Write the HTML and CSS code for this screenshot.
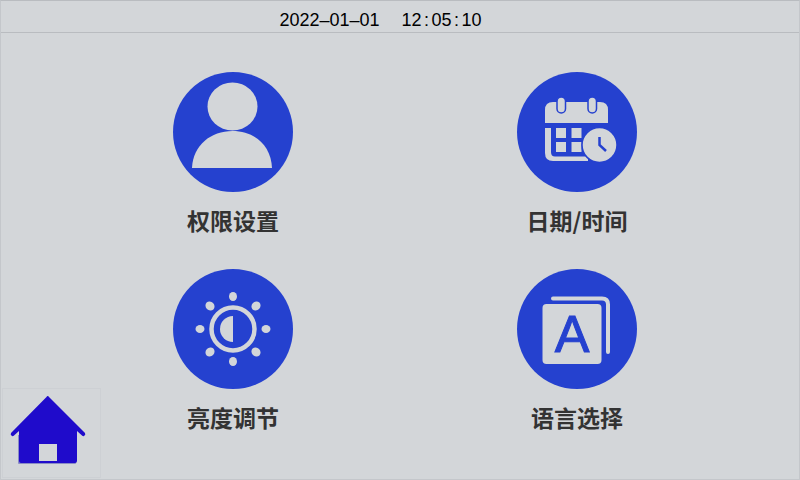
FILE: index.html
```html
<html>
<head>
<title>settings</title>
<meta charset='utf-8'/>
<link rel="stylesheet" href="styles.css">
</head>
<body>
<div id='screen'>
<div class='topbar'>
<span class='clock'>2022&ndash;01&ndash;01</span>
<span class='clock'>12<span class='colon'>:</span>05<span class='colon'>:</span>10</span>
</div>
<div class='menu'>
<div class='item first'>
<svg class='icon' viewBox='0 0 120 120'>
<circle class='disc' cx='60' cy='60' r='60'/>
<ellipse class='pale' cx='59.500' cy='34.500' rx='25' ry='24'/>
<path class='pale' d='M19 96C20 73 38 59 59.500 59C81 59 98 73 99 96Z'/>
</svg>
<div class='label'>权限设置</div>
</div>
<div class='item'>
<svg class='icon' viewBox='0 0 120 120'>
<circle class='disc' cx='60' cy='60' r='60'/>
<path class='pale' d='M28 51V38Q28 30 36 30H83Q91 30 91 38V51Z'/>
<rect class='pale ring' x='40' y='25' width='8.500' height='16' rx='4.250'/>
<rect class='pale ring' x='71' y='25' width='8.500' height='16' rx='4.250'/>
<path class='pale' d='M28 56H34V80Q34 84.500 38 84.500H71V89H36Q28 89 28 81Z'/>
<rect class='pale' x='39' y='56' width='10' height='10'/>
<rect class='pale' x='54.500' y='56' width='10' height='10'/>
<rect class='pale' x='39' y='70' width='10' height='10'/>
<rect class='pale' x='54.500' y='70' width='10' height='10'/>
<circle class='pale ring' cx='82.500' cy='73' r='17.500'/>
<path class='hand' d='M82.500 65V73L89 79'/>
</svg>
<div class='label'>日期/时间</div>
</div>
<button class='home'>
<svg viewBox='0 0 99 90' width='99' height='90'>
<path class='home-shade' d='M16 47H74V75Q74 76 73 76H17Q16 76 16 75Z'/>
<path class='home-fill' d='M45.700 8Q46.500 8 47 9L83 45Q84 47 82 48Q81 48.500 80 47.500L75 43V73Q75 75 73 75H19Q17 75 17 73V43L12 47.500Q11 48.500 10 48Q8 47 9 45L44.500 9Q45 8 45.700 8Z'/>
<rect class='pale' x='37' y='56' width='18' height='17'/>
</svg>
</button>
<div class='item first'>
<svg class='icon' viewBox='0 0 120 120'>
<circle class='disc' cx='60' cy='60' r='60'/>
<circle class='sun' cx='60' cy='60' r='21.500'/>
<path class='pale' d='M60 47A13 13 0 0 0 60 73Z'/>
<ellipse class='pale' cx='60' cy='27.500' rx='4' ry='4.500'/>
<ellipse class='pale' cx='60' cy='92.500' rx='4' ry='4.500'/>
<ellipse class='pale' cx='27' cy='60' rx='4.500' ry='4'/>
<ellipse class='pale' cx='93' cy='60' rx='4.500' ry='4'/>
<ellipse class='pale' cx='37' cy='37' rx='4.800' ry='4.300' transform='rotate(45 37 37)'/>
<ellipse class='pale' cx='83' cy='37' rx='4.800' ry='4.300' transform='rotate(-45 83 37)'/>
<ellipse class='pale' cx='37' cy='83' rx='4.800' ry='4.300' transform='rotate(-45 37 83)'/>
<ellipse class='pale' cx='83' cy='83' rx='4.800' ry='4.300' transform='rotate(45 83 83)'/>
</svg>
<div class='label'>亮度调节</div>
</div>
<div class='item'>
<svg class='icon' viewBox='0 0 120 120'>
<circle class='disc' cx='60' cy='60' r='60'/>
<path class='back' d='M36 29.500H85Q91 29.500 91 35.500V83'/>
<rect class='pale' x='25.500' y='35' width='59' height='60' rx='4'/>
<text class='letter' x='55' y='83'>A</text>
</svg>
<div class='label'>语言选择</div>
</div>
</div>
</div>
</body>
</html>
```
FILE: styles.css
```css
html, body {
	margin: 0;
	padding: 0;
}
#screen {
	width: 800px;
	height: 480px;
	box-sizing: border-box;
	background: #d3d6d9;
	border-top: 1px solid #b9bcc0;
	border-left: 1px solid #c4c7cb;
	border-right: 1px solid #c4c7cb;
	border-bottom: 1px solid #c4c7cb;
	overflow: hidden;
	display: flex;
	flex-direction: column;
}
.topbar {
	height: 24px;
	padding: 7px 39px 0 0;
	border-bottom: 1px solid #b9bcc0;
	display: flex;
	justify-content: center;
	align-items: center;
	gap: 22px;
	font-family: "Liberation Sans", Arial, sans-serif;
	font-size: 18px;
	color: #000;
}
.colon {
	padding: 0 2.5px;
}
.menu {
	flex: 1;
	display: grid;
	grid-template-columns: 99px 266px 422px;
	grid-template-rows: 197px 1fr;
	padding: 39px 0 1px 0;
}
.item {
	display: flex;
	flex-direction: column;
	align-items: center;
}
.item.first {
	grid-column: 2;
}
.icon {
	width: 120px;
	height: 120px;
	display: block;
}
.label {
	margin-top: 12px;
	font-family: "Noto Sans CJK SC", sans-serif;
	font-size: 23px;
	line-height: 32px;
	font-weight: bold;
	color: #333;
}
.disc {
	fill: #2541cf;
}
.pale {
	fill: #d3d6d9;
}
.ring {
	stroke: #2541cf;
	stroke-width: 1.500;
}
.hand {
	fill: none;
	stroke: #2541cf;
	stroke-width: 2.500;
}
.sun {
	fill: none;
	stroke: #d3d6d9;
	stroke-width: 4.500;
}
.back {
	fill: none;
	stroke: #d3d6d9;
	stroke-width: 4;
	stroke-linecap: round;
}
.letter {
	fill: #2541cf;
	stroke: #2541cf;
	stroke-width: 1;
	font-family: "Liberation Sans", Arial, sans-serif;
	font-size: 52px;
	text-anchor: middle;
}
.home {
	grid-column: 1;
	grid-row: 2;
	align-self: end;
	justify-self: start;
	width: 99px;
	height: 90px;
	padding: 0;
	margin: 0 0 0 1px;
	background: none;
	border: none;
	outline: 1px solid #cdd0d4;
	outline-offset: -1px;
}
.home svg {
	display: block;
}
.home-fill {
	fill: #1f0bcb;
}
.home-shade {
	fill: #8a8cc4;
}
```
